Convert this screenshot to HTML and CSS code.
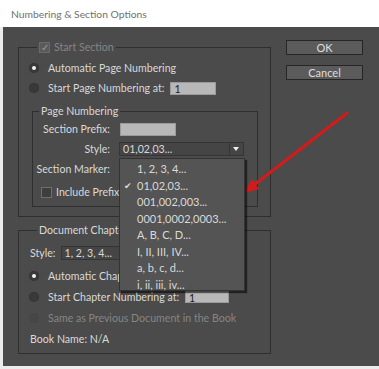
FILE: index.html
```html
<!DOCTYPE html>
<html lang="en">
<head>
<meta charset="UTF-8" />
<title>Numbering &amp; Section Options</title>
<link rel="stylesheet" href="styles.css">
</head>
<body>

<div class="window">
  <div class="titlebar">Numbering &amp; Section Options</div>

  <div class="dialog">
    <div class="panel">
      <fieldset class="group start-section">
        <legend><span class="check disabled">&#10003;</span>Start Section</legend>
        <div class="row"><span class="radio on"></span>Automatic Page Numbering</div>
        <div class="row"><span class="radio"></span>Start Page Numbering at:<span class="field page-start">1</span></div>

        <fieldset class="group page-numbering">
          <legend>Page Numbering</legend>
          <div class="form">
            <label>Section Prefix:</label>
            <span class="field prefix"></span>
            <label>Style:</label>
            <div class="select page-style">
              <span class="value">01,02,03...</span>
              <span class="drop"></span>
              <ul class="menu">
                <li>1, 2, 3, 4...</li>
                <li class="checked">01,02,03...</li>
                <li>001,002,003...</li>
                <li>0001,0002,0003...</li>
                <li>A, B, C, D...</li>
                <li>I, II, III, IV...</li>
                <li>a, b, c, d...</li>
                <li>i, ii, iii, iv...</li>
              </ul>
            </div>
            <label>Section Marker:</label>
            <span></span>
          </div>
          <div class="row include"><span class="check"></span>Include Prefix when Numbering Pages</div>
        </fieldset>
      </fieldset>

      <fieldset class="group chapter">
        <legend>Document Chapter Numbering</legend>
        <div class="row style-row">
          <label>Style:</label>
          <div class="select chapter-style"><span class="value">1, 2, 3, 4...</span><span class="drop"></span></div>
        </div>
        <div class="row"><span class="radio on"></span>Automatic Chapter Numbering</div>
        <div class="row"><span class="radio"></span>Start Chapter Numbering at:<span class="field chapter-start">1</span></div>
        <div class="row disabled"><span class="radio"></span>Same as Previous Document in the Book</div>
        <div class="row book">Book Name: N/A</div>
      </fieldset>
    </div>

    <div class="buttons">
      <button>OK</button>
      <button>Cancel</button>
    </div>
  </div>

  <svg class="pointer" width="379" height="369" viewBox="0 0 379 369">
    <line x1="347" y1="113" x2="254" y2="185" stroke="#d41a1a" stroke-width="3" stroke-linecap="round"/>
    <polygon points="244,193 259,189 252,179" fill="#d41a1a"/>
  </svg>
</div>

</body>
</html>
```

FILE: styles.css
```css
:root {
  --bg: #4b4b4b;
  --line: #2f2f2f;
  --text: #d9d9d9;
  --dim: #858585;
  --field: #b8b8b8;
}

body {
  margin: 0;
  background: #fff;
  font-family: Lato, "Open Sans", sans-serif;
  font-size: 10.6px;
}

.window {
  position: relative;
  width: 379px;
  height: 369px;
  background: #ececec;
  overflow: hidden;
}

.titlebar {
  height: 27px;
  line-height: 28px;
  padding-left: 11px;
  background: #fff;
  color: #707070;
  font-size: 10.3px;
}

.dialog {
  display: flex;
  margin-left: 3px;
  height: 339px;
  padding: 13px 0 0 15px;
  box-sizing: border-box;
  background: var(--bg);
  color: var(--text);
}

.panel {
  width: 253px;
}

.group {
  margin: 0;
  padding: 0;
  border: 1px solid var(--line);
}

.group legend {
  padding: 0 2px;
  line-height: 15px;
}

.row {
  display: flex;
  align-items: center;
  height: 20px;
  white-space: nowrap;
}

/* start section */
.start-section {
  padding: 3px 12px 9px 10px;
}

.start-section > legend {
  margin-left: 8px;
  color: var(--dim);
  display: flex;
  align-items: center;
}

.check {
  display: inline-block;
  width: 9px;
  height: 9px;
  margin-right: 4px;
  border: 1px solid #6f6f6f;
  background: #3e3e3e;
  font-size: 10px;
  line-height: 9px;
  text-align: center;
  color: #9a9a9a;
}

.check.disabled {
  background: #5a5a5a;
  border-color: #6a6a6a;
}

.radio {
  display: inline-block;
  position: relative;
  width: 10px;
  height: 10px;
  margin-right: 9px;
  border-radius: 50%;
  background: #393939;
  box-shadow: inset 0 0 0 1px #363636;
}

.radio.on::after {
  content: "";
  position: absolute;
  left: 3px;
  top: 3px;
  width: 4px;
  height: 4px;
  border-radius: 50%;
  background: #f2f2f2;
}

.field {
  display: inline-block;
  height: 12px;
  line-height: 13px;
  padding-left: 3px;
  box-sizing: border-box;
  background: var(--field);
  color: #1f1f1f;
  border: 1px solid #9a9a9a;
}

.page-start {
  width: 46px;
  height: 13px;
  margin-left: 6px;
}

/* page numbering */
.page-numbering {
  margin-top: 6px;
  margin-left: 3px;
  padding: 0 0 4px 0;
}

.page-numbering legend {
  margin-left: 6px;
}

.form {
  display: grid;
  grid-template-columns: 77px 125px;
  grid-auto-rows: 20px;
  column-gap: 9px;
  align-items: center;
}

.form label {
  text-align: right;
}

.prefix {
  width: 56px;
  height: 13px;
  margin-left: 1px;
}

.select {
  position: relative;
  display: flex;
  height: 14px;
  box-sizing: border-box;
  border: 1px solid #353535;
  background: #454545;
}

.select .value {
  flex: 1;
  padding-left: 3px;
  line-height: 12px;
}

.select .drop {
  position: relative;
  width: 13px;
  border-left: 1px solid #353535;
}

.select .drop::after {
  content: "";
  position: absolute;
  left: 3px;
  top: 4px;
  border-left: 3px solid transparent;
  border-right: 3px solid transparent;
  border-top: 4px solid #eee;
}

.menu {
  position: absolute;
  left: -1px;
  top: 15px;
  width: 126px;
  margin: 0;
  padding: 2px 0 0;
  list-style: none;
  box-sizing: border-box;
  height: 133px;
  background: #545454;
  border: 1px solid #333;
  box-shadow: 2px 2px 1px rgba(0, 0, 0, 0.55);
  z-index: 2;
  font-size: 11px;
}

.menu li {
  height: 16.5px;
  line-height: 16.5px;
  padding-left: 17px;
  position: relative;
}

.menu li.checked::before {
  content: "\2714";
  position: absolute;
  left: 4px;
  font-size: 9px;
}

.include {
  margin-top: 3px;
  padding-left: 8px;
}

/* document chapter */
.chapter {
  margin-top: 6px;
  padding: 4px 0 4px 10px;
}

.chapter legend {
  margin-left: 8px;
}

.chapter .row {
  height: 21px;
}

.chapter .style-row {
  margin-bottom: 2px;
}

.style-row label {
  margin: 0 5px 0 1px;
}

.chapter-style {
  width: 120px;
}

.chapter-start {
  width: 44px;
  margin-left: 6px;
}

.row.disabled {
  color: var(--dim);
}

.row.disabled .radio {
  background: #464646;
  box-shadow: none;
}

.book {
  padding-left: 1px;
}

/* buttons */
.buttons {
  display: flex;
  flex-direction: column;
  gap: 10px;
  margin-left: 15px;
}

.buttons button {
  width: 77px;
  height: 15px;
  padding: 0;
  border: 1px solid #262626;
  background: #5b5b5b;
  color: #dedede;
  font-family: inherit;
  font-size: 11px;
  line-height: 12px;
}

.pointer {
  position: absolute;
  left: 0;
  top: 0;
  pointer-events: none;
}
```
